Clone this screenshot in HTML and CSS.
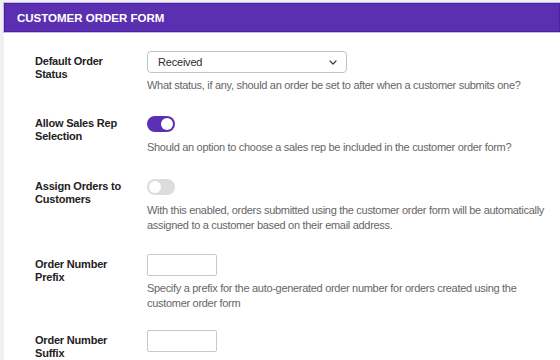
FILE: index.html
```html
<!DOCTYPE html>
<html>
<head>
<meta charset="utf-8">
<link rel="stylesheet" href="styles.css">
</head>
<body>
<div class="panel">
  <div class="panel-header">Customer Order Form</div>
  <div class="form">
    <div class="row row-a">
      <div class="label label-input">Default Order Status</div>
      <div class="field">
        <div class="select"><span>Received</span>
          <svg class="chev" width="8" height="5" viewBox="0 0 8 5"><path d="M1 1 L4 4 L7 1" fill="none" stroke="#3a3a3a" stroke-width="1.2" stroke-linecap="round" stroke-linejoin="round"/></svg>
        </div>
        <p class="desc desc-input">What status, if any, should an order be set to after when a customer submits one?</p>
      </div>
    </div>
    <div class="row row-b">
      <div class="label label-toggle">Allow Sales Rep Selection</div>
      <div class="field">
        <div class="toggle toggle-on"><span class="knob"></span></div>
        <p class="desc desc-toggle">Should an option to choose a sales rep be included in the customer order form?</p>
      </div>
    </div>
    <div class="row row-c">
      <div class="label label-toggle">Assign Orders to Customers</div>
      <div class="field">
        <div class="toggle"><span class="knob"></span></div>
        <p class="desc desc-toggle">With this enabled, orders submitted using the customer order form will be automatically assigned to a customer based on their email address.</p>
      </div>
    </div>
    <div class="row row-d">
      <div class="label label-input">Order Number Prefix</div>
      <div class="field">
        <div class="text-input"></div>
        <p class="desc desc-input">Specify a prefix for the auto-generated order number for orders created using the customer order form</p>
      </div>
    </div>
    <div class="row">
      <div class="label label-input">Order Number Suffix</div>
      <div class="field">
        <div class="text-input"></div>
        <p class="desc desc-input">Specify a suffix for the auto-generated order number for orders created using the customer order form</p>
      </div>
    </div>
  </div>
</div>
</body>
</html>
```

FILE: styles.css
```css
html, body {
  margin: 0;
  padding: 0;
  background: #f0f0f1;
  font-family: "Liberation Sans", Arial, sans-serif;
  overflow: hidden;
}

.panel {
  margin: 3px 0 0 4px;
  background: #ffffff;
  min-height: 400px;
}

.panel-header {
  height: 27px;
  background: #5a30b1;
  border: 1px solid #4b1fa6;
  box-shadow: 0 0 0 1px #c9bbe9;
  color: #ffffff;
  font-size: 11.5px;
  font-weight: 700;
  text-transform: uppercase;
  line-height: 28px;
  padding-left: 12px;
}

.form {
  padding: 19px 0 0 31px;
}

.row {
  display: grid;
  grid-template-columns: 112px 1fr;
  padding-bottom: 23px;
}

.row-a { padding-bottom: 23px; }
.row-b { padding-bottom: 24px; }
.row-c { padding-bottom: 21px; }
.row-d { padding-bottom: 19px; }

.label {
  font-size: 11px;
  font-weight: 700;
  letter-spacing: -0.2px;
  line-height: 13px;
  color: #222222;
  width: 90px;
}

.label-input {
  padding-top: 4px;
}

.label-toggle {
  padding-top: 1px;
}

.field {
  padding-right: 6px;
}

.select {
  width: 200px;
  height: 22px;
  box-sizing: border-box;
  border: 1px solid #c3c3c3;
  border-radius: 4px;
  display: flex;
  align-items: center;
  justify-content: space-between;
  padding: 0 9px 0 10px;
  font-size: 11px;
  letter-spacing: -0.2px;
  color: #2c2c2c;
}

.chev {
  display: block;
}

.text-input {
  width: 70px;
  height: 22px;
  box-sizing: border-box;
  border: 1px solid #c8c8c8;
  border-radius: 2px;
  background: #fff;
}

.toggle {
  width: 28px;
  height: 16px;
  border-radius: 8px;
  background: #dcdcdc;
  position: relative;
}

.toggle-on {
  background: #5b2fb6;
}

.knob {
  position: absolute;
  top: 2px;
  left: 2px;
  width: 12px;
  height: 12px;
  border-radius: 50%;
  background: #ffffff;
}

.toggle-on .knob {
  left: 14px;
}

.desc {
  margin: 0;
  font-size: 11px;
  letter-spacing: -0.3px;
  line-height: 15px;
  color: #666666;
}

.desc-input {
  margin-top: 5px;
}

.desc-toggle {
  margin-top: 8px;
}
```
